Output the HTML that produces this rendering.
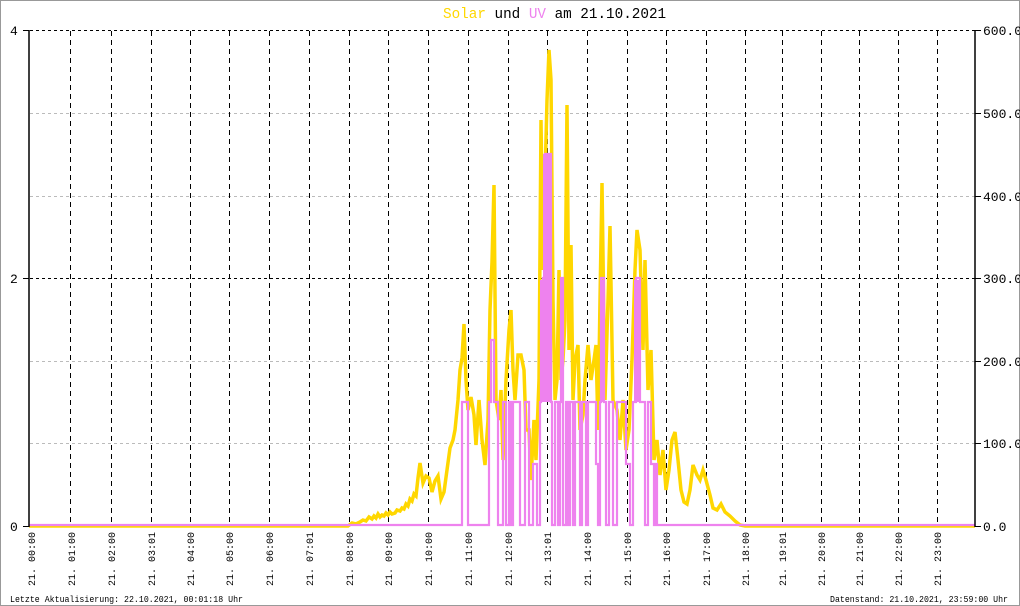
<!DOCTYPE html>
<html><head><meta charset="utf-8"><style>
html,body{margin:0;padding:0;background:#fff}
svg{display:block}
text{font-family:"Liberation Mono","DejaVu Sans Mono",monospace}
</style></head><body>
<svg width="1020" height="606" viewBox="0 0 1020 606" xmlns="http://www.w3.org/2000/svg">
<rect x="0.5" y="0.5" width="1019" height="605" fill="#fff" stroke="#999"/>
<text x="443" y="18" font-size="14.3"><tspan fill="#ffd700">Solar</tspan> und <tspan fill="#ee82ee">UV</tspan> am 21.10.2021</text>
<g stroke="#bbb" stroke-dasharray="3,3" stroke-width="1">
<line x1="30" y1="113.5" x2="975" y2="113.5"/>
<line x1="30" y1="196.5" x2="975" y2="196.5"/>
<line x1="30" y1="361.5" x2="975" y2="361.5"/>
<line x1="30" y1="443.5" x2="975" y2="443.5"/>
</g>
<g stroke="#000" stroke-dasharray="3,3" stroke-width="1">
<line x1="30" y1="30.5" x2="975" y2="30.5"/>
<line x1="30" y1="278.5" x2="975" y2="278.5"/>
</g>
<g stroke="#000" stroke-dasharray="5,4" stroke-width="1">
<line x1="70.5" y1="31" x2="70.5" y2="526"/><line x1="111.5" y1="31" x2="111.5" y2="526"/>
<line x1="151.5" y1="31" x2="151.5" y2="526"/><line x1="190.5" y1="31" x2="190.5" y2="526"/>
<line x1="229.5" y1="31" x2="229.5" y2="526"/><line x1="269.5" y1="31" x2="269.5" y2="526"/>
<line x1="309.5" y1="31" x2="309.5" y2="526"/><line x1="349.5" y1="31" x2="349.5" y2="526"/>
<line x1="388.5" y1="31" x2="388.5" y2="526"/><line x1="428.5" y1="31" x2="428.5" y2="526"/>
<line x1="468.5" y1="31" x2="468.5" y2="526"/><line x1="508.5" y1="31" x2="508.5" y2="526"/>
<line x1="547.5" y1="31" x2="547.5" y2="526"/><line x1="587.5" y1="31" x2="587.5" y2="526"/>
<line x1="627.5" y1="31" x2="627.5" y2="526"/><line x1="666.5" y1="31" x2="666.5" y2="526"/>
<line x1="706.5" y1="31" x2="706.5" y2="526"/><line x1="745.5" y1="31" x2="745.5" y2="526"/>
<line x1="782.5" y1="31" x2="782.5" y2="526"/><line x1="821.5" y1="31" x2="821.5" y2="526"/>
<line x1="859.5" y1="31" x2="859.5" y2="526"/><line x1="898.5" y1="31" x2="898.5" y2="526"/>
<line x1="937.5" y1="31" x2="937.5" y2="526"/>
</g>
<polyline fill="none" stroke="#ffd700" stroke-width="3.5" stroke-linejoin="miter" points="29,526 348,526 352,523 356,524 360,522 363,520 366,521 369,517 372,519 374,516 376,518 378,514 380,517 382,515 384,516 386,513 388,515 390,512 392,514 395,513 397,510 400,511 402,508 404,509 406,504 408,506 410,499 412,501 414,494 416,496 418,478 420,463 423,483 426,476 429,478 432,492 435,481 438,476 441,499 444,492 447,470 450,448 453,440 455,430 458,400 460,370 462,358 464,324 466,380 468,410 471,397 474,415 476,445 479,400 482,440 485,465 488,420 490,310 492,262 494,185 496,400 499,420 501,390 503,460 506,380 509,330 511,310 513,370 515,400 518,355 521,355 524,370 526,430 529,430 531,480 534,420 536,460 539,380 541,120 543,270 545,180 547,100 549,50 551,80 553,300 555,400 557,380 559,270 561,380 563,360 565,320 567,105 569,350 571,245 573,400 575,360 578,345 580,430 583,415 585,380 588,345 591,380 594,360 596,345 598,430 600,300 602,183 605,400 608,300 610,226 613,400 617,410 620,440 623,400 626,450 629,430 632,360 635,270 637,230 640,250 643,350 645,260 648,390 651,350 654,460 657,440 660,475 663,450 666,490 669,470 672,440 675,432 678,460 681,490 684,502 687,504 690,490 693,465 697,475 700,480 703,470 706,480 710,495 713,508 717,510 721,504 725,512 730,516 735,521 740,525 745,526 975,526"/>
<path fill="none" stroke="#ee82ee" stroke-width="2.2" d="M29,525 H462 V402 H468 V525 H489 V402 H491 V340 H494 V402 H498 V525 H503 V402 H506 V525 H509 V402 H511 V525 H513 V402 H520 V525 H525 V402 H529 V525 H533 V464 H537 V525 H540 V402 H541 V340 H543 V278 H545 V154 H551 V402 H552 V525 H555 V402 H558 V525 H560 V402 H561 V278 H563 V525 H566 V402 H568 V525 H570 V402 H573 V525 H575 V402 H580 V525 H582 V402 H586 V525 H588 V402 H596 V464 H598 V525 H600 V402 H601 V278 H604 V402 H606 V525 H609 V402 H613 V525 H617 V402 H626 V464 H630 V525 H633 V402 H636 V278 H640 V402 H645 V525 H648 V402 H651 V464 H654 V525 H656 V464 H657 V525 H975"/>
<g fill="#ee82ee">
<rect x="540" y="280" width="12" height="122"/><rect x="543" y="154" width="8" height="126"/>
<rect x="600" y="280" width="5" height="122"/><rect x="634" y="280" width="5" height="122"/>
</g>
<g stroke="#000" stroke-width="1.5">
<line x1="29" y1="30" x2="29" y2="527"/>
<line x1="975" y1="30" x2="975" y2="527"/>
</g>
<g stroke="#000" stroke-width="1">
<line x1="23" y1="30.5" x2="29" y2="30.5"/><line x1="23" y1="278.5" x2="29" y2="278.5"/><line x1="23" y1="526.5" x2="29" y2="526.5"/>
<line x1="975" y1="30.5" x2="981" y2="30.5"/><line x1="975" y1="113.5" x2="981" y2="113.5"/><line x1="975" y1="196.5" x2="981" y2="196.5"/>
<line x1="975" y1="278.5" x2="981" y2="278.5"/><line x1="975" y1="361.5" x2="981" y2="361.5"/><line x1="975" y1="443.5" x2="981" y2="443.5"/>
<line x1="975" y1="526.5" x2="981" y2="526.5"/>
</g>
<g font-size="13" fill="#000">
<text x="10" y="35">4</text><text x="10" y="283">2</text><text x="10" y="531">0</text>
<text x="983" y="35">600.0</text><text x="983" y="118">500.0</text><text x="983" y="201">400.0</text>
<text x="983" y="283">300.0</text><text x="983" y="366">200.0</text><text x="983" y="448">100.0</text>
<text x="983" y="531">0.0</text>
</g>
<g font-size="10" fill="#000">
<text transform="translate(35,586) rotate(-90)">21. 00:00</text>
<text transform="translate(75,586) rotate(-90)">21. 01:00</text>
<text transform="translate(115,586) rotate(-90)">21. 02:00</text>
<text transform="translate(155,586) rotate(-90)">21. 03:01</text>
<text transform="translate(194,586) rotate(-90)">21. 04:00</text>
<text transform="translate(233,586) rotate(-90)">21. 05:00</text>
<text transform="translate(273,586) rotate(-90)">21. 06:00</text>
<text transform="translate(313,586) rotate(-90)">21. 07:01</text>
<text transform="translate(353,586) rotate(-90)">21. 08:00</text>
<text transform="translate(392,586) rotate(-90)">21. 09:00</text>
<text transform="translate(432,586) rotate(-90)">21. 10:00</text>
<text transform="translate(472,586) rotate(-90)">21. 11:00</text>
<text transform="translate(512,586) rotate(-90)">21. 12:00</text>
<text transform="translate(551,586) rotate(-90)">21. 13:01</text>
<text transform="translate(591,586) rotate(-90)">21. 14:00</text>
<text transform="translate(631,586) rotate(-90)">21. 15:00</text>
<text transform="translate(670,586) rotate(-90)">21. 16:00</text>
<text transform="translate(710,586) rotate(-90)">21. 17:00</text>
<text transform="translate(749,586) rotate(-90)">21. 18:00</text>
<text transform="translate(786,586) rotate(-90)">21. 19:01</text>
<text transform="translate(825,586) rotate(-90)">21. 20:00</text>
<text transform="translate(863,586) rotate(-90)">21. 21:00</text>
<text transform="translate(902,586) rotate(-90)">21. 22:00</text>
<text transform="translate(941,586) rotate(-90)">21. 23:00</text>
</g>
<g font-size="9" fill="#000">
<text x="10" y="602" textLength="233" lengthAdjust="spacingAndGlyphs">Letzte Aktualisierung: 22.10.2021, 00:01:18 Uhr</text>
<text x="830" y="602" textLength="178" lengthAdjust="spacingAndGlyphs">Datenstand: 21.10.2021, 23:59:00 Uhr</text>
</g>
</svg>
</body></html>
